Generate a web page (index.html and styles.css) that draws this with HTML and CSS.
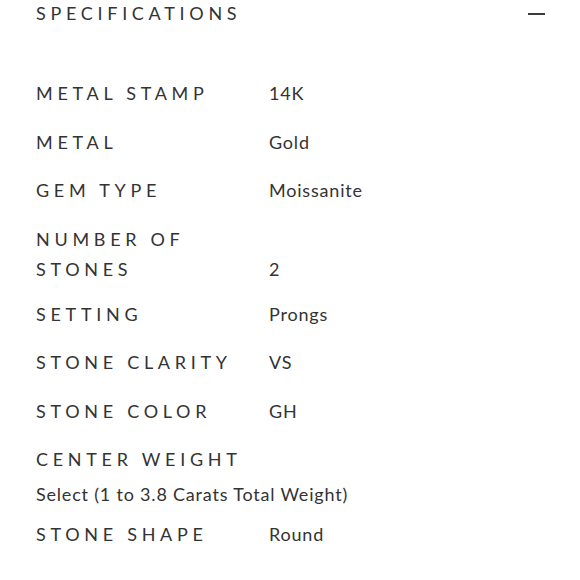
FILE: index.html
```html
<!DOCTYPE html>
<html lang="en">
<head>
<meta charset="utf-8">
<title>Specifications</title>
<link rel="stylesheet" href="styles.css">
</head>
<body>
<section class="specs">
  <header class="specs__header">
    <h2 class="specs__title">SPECIFICATIONS</h2>
    <span class="specs__toggle" aria-label="Collapse"></span>
  </header>
  <dl class="specs__list">
    <div class="row"><dt class="label">METAL STAMP</dt><dd class="value">14K</dd></div>
    <div class="row"><dt class="label">METAL</dt><dd class="value">Gold</dd></div>
    <div class="row"><dt class="label">GEM TYPE</dt><dd class="value">Moissanite</dd></div>
    <div class="row row--multi"><dt class="label label--narrow">NUMBER OF STONES</dt><dd class="value">2</dd></div>
    <div class="row"><dt class="label">SETTING</dt><dd class="value">Prongs</dd></div>
    <div class="row"><dt class="label">STONE CLARITY</dt><dd class="value">VS</dd></div>
    <div class="row"><dt class="label">STONE COLOR</dt><dd class="value">GH</dd></div>
    <div class="row row--stacked"><dt class="label">CENTER WEIGHT</dt><dd class="value">Select (1 to 3.8 Carats Total Weight)</dd></div>
    <div class="row"><dt class="label">STONE SHAPE</dt><dd class="value">Round</dd></div>
  </dl>
</section>
</body>
</html>
```

FILE: styles.css
```css
* { box-sizing: border-box; }
html, body { margin: 0; padding: 0; background: #fff; }
body {
  font-family: "Lato", "Open Sans", sans-serif;
  color: #333;
}
.specs {
  padding: 0 35px 0 36px;
}
.specs__header {
  display: flex;
  justify-content: space-between;
  align-items: center;
  height: 27px;
}
.specs__title {
  margin: 0;
  font-size: 18px;
  font-weight: 400;
  letter-spacing: 4.7px;
  line-height: 27px;
}
.specs__toggle {
  display: block;
  width: 17px;
  height: 1.5px;
  background: #3c3c3c;
  margin-top: 1px;
}
.specs__list {
  margin: 51px 0 0;
  display: flex;
  flex-direction: column;
  gap: 14px;
}
.row {
  display: flex;
  align-items: flex-start;
}
.label {
  width: 233px;
  flex: none;
  margin: 0;
  font-size: 18px;
  font-weight: 400;
  letter-spacing: 4.7px;
  line-height: 30.5px;
}
.label--narrow { padding-right: 60px; }
.value {
  margin: 0;
  align-self: flex-end;
  font-size: 18px;
  letter-spacing: 0.8px;
  line-height: 31.5px;
  padding-bottom: 3px;
}
.row--multi .value {
  margin-bottom: -3.5px;
}
.row--stacked {
  flex-direction: column;
}
.row--stacked .value {
  align-self: flex-start;
  line-height: 21.5px;
  padding: 9px 0 0;
}
```
